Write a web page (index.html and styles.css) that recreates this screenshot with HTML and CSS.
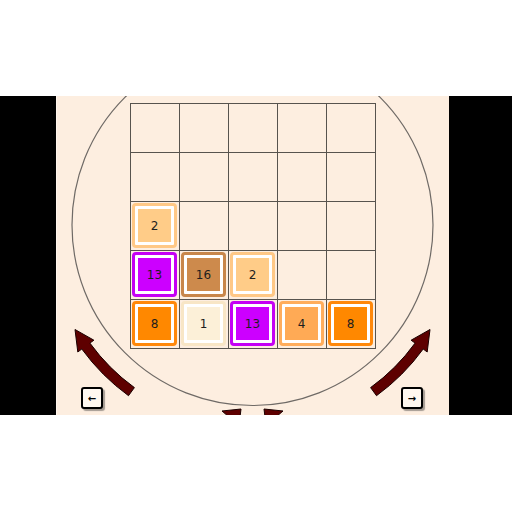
FILE: index.html
```html
<!DOCTYPE html>
<html>
<head>
<meta charset="utf-8">
<link rel="stylesheet" href="styles.css">
</head>
<body>
<div class="stage">
  <div class="board">
    <svg class="overlay" width="393" height="319" viewBox="0 0 393 319">
      <circle cx="196.5" cy="129" r="180.5" fill="none" stroke="#6f6a66" stroke-width="1.2"/>
      <path class="arrow" d="M 78.4 291.6 A 201 201 0 0 1 33.9 247.1 L 37.9 244.2 L 19 233.5 L 21.8 256 L 25.8 253 A 211 211 0 0 0 72.5 299.7 Z"/>
      <path class="arrow" d="M 314.6 291.6 A 201 201 0 0 0 359.1 247.1 L 355.1 244.2 L 374 233.5 L 371.2 256 L 367.2 253 A 211 211 0 0 1 320.5 299.7 Z"/>
      <path class="arrow" d="M 166 315 L 185 313 L 184 321 L 173 321 Z"/>
      <path class="arrow" d="M 208 313 L 227 315 L 220 321 L 209 321 Z"/>
    </svg>
    <div class="grid">
      <div class="cell"></div><div class="cell"></div><div class="cell"></div><div class="cell"></div><div class="cell"></div>
      <div class="cell"></div><div class="cell"></div><div class="cell"></div><div class="cell"></div><div class="cell"></div>
      <div class="cell"><div class="tile t2"><span>2</span></div></div><div class="cell"></div><div class="cell"></div><div class="cell"></div><div class="cell"></div>
      <div class="cell"><div class="tile t13"><span>13</span></div></div><div class="cell"><div class="tile t16"><span>16</span></div></div><div class="cell"><div class="tile t2"><span>2</span></div></div><div class="cell"></div><div class="cell"></div>
      <div class="cell"><div class="tile t8"><span>8</span></div></div><div class="cell"><div class="tile t1"><span>1</span></div></div><div class="cell"><div class="tile t13"><span>13</span></div></div><div class="cell"><div class="tile t4"><span>4</span></div></div><div class="cell"><div class="tile t8"><span>8</span></div></div>
    </div>
    <div class="key key-left">←</div>
    <div class="key key-right">→</div>
  </div>
</div>
</body>
</html>
```
FILE: styles.css
```css
html, body {
  margin: 0;
  padding: 0;
  background: #ffffff;
}
body {
  padding-top: 96px;
  font-family: "DejaVu Sans", sans-serif;
}
.stage {
  display: flex;
  height: 319px;
  background: #000000;
  padding: 0 63px 0 56px;
}
.board {
  position: relative;
  flex: 1;
  background: #fdeee0;
  overflow: hidden;
  border-left: 1px solid #fff6ee;
  box-sizing: border-box;
}
.overlay {
  position: absolute;
  left: -1px;
  top: 0;
}
.arrow {
  fill: #5e0000;
  stroke: #1a0000;
  stroke-width: 1;
  stroke-linejoin: miter;
}
.grid {
  position: relative;
  display: grid;
  grid-template-columns: repeat(5, 49px);
  grid-template-rows: repeat(5, 49px);
  width: 245px;
  margin: 7px 0 0 73px;
  border-left: 1px solid #57534e;
  border-top: 1px solid #57534e;
}
.cell {
  border-right: 1px solid #57534e;
  border-bottom: 1px solid #57534e;
}
.tile {
  width: 45px;
  height: 45px;
  margin: 1px 0 0 1px;
  box-sizing: border-box;
  border: 3px solid;
  border-radius: 4px;
  background: #ffffff;
  padding: 3px;
}
.tile span {
  display: flex;
  align-items: center;
  justify-content: center;
  width: 100%;
  height: 100%;
  font-size: 12px;
  color: #1e1e1e;
}
.t1 { border-color: #f8e6c6; }
.t1 span { background: #fcf0d8; }
.t2 { border-color: #ffc886; }
.t2 span { background: #ffcc88; }
.t4 { border-color: #ffad5c; }
.t4 span { background: #ffaa55; }
.t8 { border-color: #ff880a; }
.t8 span { background: #ff8800; }
.t13 { border-color: #c400f4; }
.t13 span { background: #cc00ff; }
.t16 { border-color: #c8864a; }
.t16 span { background: #cd8a4c; }
.key {
  position: absolute;
  top: 291px;
  width: 22px;
  height: 22px;
  box-sizing: border-box;
  border: 2px solid #000000;
  border-radius: 3px;
  background: #fff8f0;
  box-shadow: 2px 2px 1px rgba(0, 0, 0, 0.35);
  display: flex;
  align-items: center;
  justify-content: center;
  font-size: 10px;
  font-weight: bold;
  color: #000000;
}
.key-left { left: 24px; }
.key-right { left: 344px; }
```
